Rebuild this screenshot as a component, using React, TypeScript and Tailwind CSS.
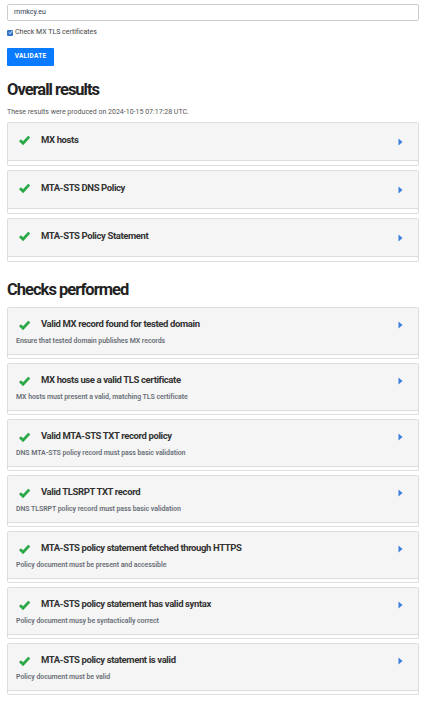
const overall = ["MX hosts", "MTA-STS DNS Policy", "MTA-STS Policy Statement"]

const checks = [
  { title: "Valid MX record found for tested domain", desc: "Ensure that tested domain publishes MX records" },
  { title: "MX hosts use a valid TLS certificate", desc: "MX hosts must present a valid, matching TLS certificate" },
  { title: "Valid MTA-STS TXT record policy", desc: "DNS MTA-STS policy record must pass basic validation" },
  { title: "Valid TLSRPT TXT record", desc: "DNS TLSRPT policy record must pass basic validation" },
  { title: "MTA-STS policy statement fetched through HTTPS", desc: "Policy document must be present and accessible" },
  { title: "MTA-STS policy statement has valid syntax", desc: "Policy document musy be syntactically correct" },
  { title: "MTA-STS policy statement is valid", desc: "Policy document must be valid" },
]

function Check() {
  return (
    <svg width="11" height="10" viewBox="0 0 11 10" className="shrink-0">
      <path d="M1 5.2 L4.1 8.2 L10.2 1.6" fill="none" stroke="#28a745" strokeWidth="2.8" />
    </svg>
  )
}

function Arrow() {
  return (
    <svg width="5" height="8" viewBox="0 0 5 8" className="shrink-0">
      <path d="M0.5 0.5 L4.5 4 L0.5 7.5 Z" fill="#3b7dd8" />
    </svg>
  )
}

export default function App() {
  return (
    <div className="w-[431px] min-h-[702px] bg-white px-[7px] pt-[4px] font-['Roboto',sans-serif] text-[#333]">
      <div className="w-[412px]">
        {/* form */}
        <div className="h-[17px] border border-[#ccc] rounded-[2px] flex items-center px-[6px] text-[7px] text-[#2c3a55]">
          mmkcy.eu
        </div>
        <label className="flex items-center gap-[2px] mt-[8px] h-[7px] text-[7px] text-[#444]">
          <span className="w-[6px] h-[6px] bg-[#2f74c9] rounded-[1px] flex items-center justify-center">
            <svg width="5" height="5" viewBox="0 0 5 5">
              <path d="M0.8 2.6 L2 3.8 L4.2 1" fill="none" stroke="white" strokeWidth="0.9" />
            </svg>
          </span>
          Check MX TLS certificates
        </label>
        <button className="mt-[12px] h-[18px] w-[47px] bg-[#0a7bff] text-white text-[6.5px] font-bold tracking-[0.04em] rounded-[1px]">
          VALIDATE
        </button>

        {/* overall */}
        <h2 className="mt-[14px] text-[16.5px] leading-[20px] font-bold tracking-[-0.06em] text-[#222]">Overall results</h2>
        <p className="mt-[8px] text-[7px] leading-[9px] text-[#555]">
          These results were produced on 2024-10-15 07:17:28 UTC.
        </p>
        <div className="mt-[5px] flex flex-col gap-[4px]">
          {overall.map((t) => (
            <div key={t} className="border border-[#ddd] rounded-[2px]">
              <div className="h-[38px] bg-[#f5f5f5] border-b border-[#ddd] flex items-start pl-[11px] pr-[15px] pt-[12px]">
                <Check />
                <span className="ml-[11px] text-[9.5px] leading-[12px] font-bold tracking-[-0.04em] text-[#333] -mt-[1px]">
                  {t}
                </span>
                <span className="ml-auto mt-[3px]">
                  <Arrow />
                </span>
              </div>
              <div className="h-[4px]" />
            </div>
          ))}
        </div>

        {/* checks */}
        <h2 className="mt-[18px] text-[16.5px] leading-[20px] font-bold tracking-[-0.06em] text-[#222]">Checks performed</h2>
        <div className="mt-[7px] flex flex-col gap-[4px]">
          {checks.map((c) => (
            <div key={c.title} className="border border-[#ddd] rounded-[2px]">
              <div className="h-[47px] bg-[#f5f5f5] border-b border-[#ddd] pl-[8px] pr-[15px] pt-[10px]">
                <div className="flex items-start">
                  <span className="ml-[3px] mt-[2px]">
                    <Check />
                  </span>
                  <span className="ml-[11px] text-[9.5px] leading-[12px] font-bold tracking-[-0.04em] text-[#333]">
                    {c.title}
                  </span>
                  <span className="ml-auto mt-[3px]">
                    <Arrow />
                  </span>
                </div>
                <p className="mt-[7px] text-[7px] leading-[9px] font-semibold tracking-[-0.01em] text-[#6a6f78]">{c.desc}</p>
              </div>
              <div className="h-[3px]" />
            </div>
          ))}
        </div>
      </div>
    </div>
  )
}
